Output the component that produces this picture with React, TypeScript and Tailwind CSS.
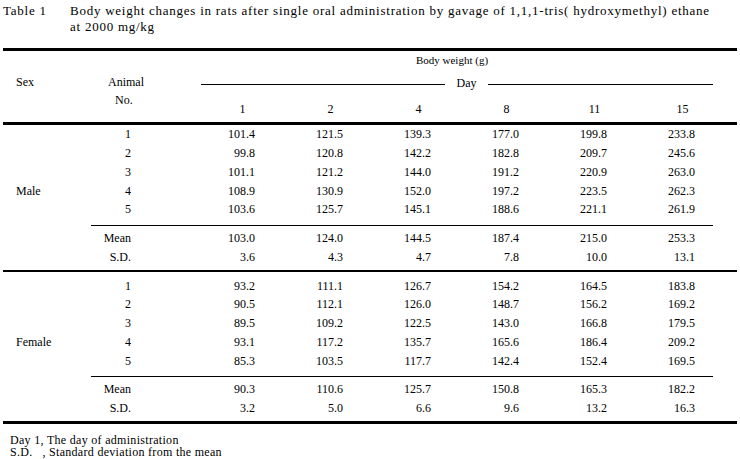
import React from 'react'

const days = ['1', '2', '4', '8', '11', '15']

const male = [
  ['1', '101.4', '121.5', '139.3', '177.0', '199.8', '233.8'],
  ['2', '99.8', '120.8', '142.2', '182.8', '209.7', '245.6'],
  ['3', '101.1', '121.2', '144.0', '191.2', '220.9', '263.0'],
  ['4', '108.9', '130.9', '152.0', '197.2', '223.5', '262.3'],
  ['5', '103.6', '125.7', '145.1', '188.6', '221.1', '261.9'],
]
const maleStats = [
  ['Mean', '103.0', '124.0', '144.5', '187.4', '215.0', '253.3'],
  ['S.D.', '3.6', '4.3', '4.7', '7.8', '10.0', '13.1'],
]
const female = [
  ['1', '93.2', '111.1', '126.7', '154.2', '164.5', '183.8'],
  ['2', '90.5', '112.1', '126.0', '148.7', '156.2', '169.2'],
  ['3', '89.5', '109.2', '122.5', '143.0', '166.8', '179.5'],
  ['4', '93.1', '117.2', '135.7', '165.6', '186.4', '209.2'],
  ['5', '85.3', '103.5', '117.7', '142.4', '152.4', '169.5'],
]
const femaleStats = [
  ['Mean', '90.3', '110.6', '125.7', '150.8', '165.3', '182.2'],
  ['S.D.', '3.2', '5.0', '6.6', '9.6', '13.2', '16.3'],
]

const Row = ({ cells, label, h }: { cells: string[]; label?: string; h: string }) => {
  return (
    <div className={`flex items-center ${h}`}>
      <div className="w-[88px] pl-[13px]">{label}</div>
      <div className="w-[88px] pr-[48px] text-right">{cells[0]}</div>
      {cells.slice(1).map((v, i) => (
        <div key={i} className="w-[88px] pr-[12px] text-right">
          {v}
        </div>
      ))}
    </div>
  )
}

const Group = ({ label, rows, stats, top }: { label: string; rows: string[][]; stats: string[][]; top: string }) => {
  return (
    <div className={top}>
      {rows.map((r, i) => (
        <Row key={i} cells={r} label={i === 3 ? label : undefined} h="h-[18.75px]" />
      ))}
      <div className="ml-[88px] mr-[24px] mt-[6px] h-px bg-black" />
      <div className="pt-[2.5px]">
        {stats.map((r, i) => (
          <Row key={i} cells={r} h="h-[19px]" />
        ))}
      </div>
    </div>
  )
}

const App = () => {
  return (
    <div className="w-[740px] h-[459px] bg-white text-black px-[3px] overflow-hidden font-['Liberation_Serif',serif] text-[12px] leading-[16px]">
      <div className="flex pt-[3px] text-[13px] leading-[16px] tracking-[0.75px] h-[48px]">
        <div className="w-[67px] shrink-0">Table 1</div>
        <div>
          Body weight changes in rats after single oral administration by gavage of 1,1,1-tris( hydroxymethyl) ethane
          <br />
          at 2000 mg/kg
        </div>
      </div>

      <div className="h-[3px] bg-black" />

      <div className="flex h-[71px]">
        <div className="w-[88px] pl-[13px] pt-[23px]">Sex</div>
        <div className="w-[88px] pt-[22px] leading-[18px]">
          <div className="pl-[17px]">Animal</div>
          <div className="pl-[24px]">No.</div>
        </div>
        <div className="flex-1 flex flex-col">
          <div className="ml-[22px] mr-[34px] pt-px text-center text-[11px]">Body weight (g)</div>
          <div className="flex items-center h-[30px] ml-[22px] mr-[24px]">
            <div className="w-[244px] h-px bg-black mt-[2px]" />
            <div className="w-[43px] text-center">Day</div>
            <div className="flex-1 h-px bg-black mt-[2px]" />
          </div>
          <div className="flex mt-[3px]">
            {days.map((d) => (
              <div key={d} className="w-[88px] pr-[12px] flex justify-end">
                <div className="w-[25px] text-center">{d}</div>
              </div>
            ))}
          </div>
        </div>
      </div>

      <div className="h-[3px] bg-black" />

      <Group label="Male" rows={male} stats={maleStats} top="pt-0" />
      <div className="mt-[4px] h-[2px] bg-black" />
      <Group label="Female" rows={female} stats={femaleStats} top="pt-[4px]" />

      <div className="mt-[3px] h-[3px] bg-black" />

      <div className="pl-[7px] pt-[10px] leading-[12.5px] tracking-[0.3px]">
        <div>Day 1, The day of administration</div>
        <div>S.D.&nbsp;&nbsp;&nbsp;, Standard deviation from the mean</div>
      </div>
    </div>
  )
}

export default App
